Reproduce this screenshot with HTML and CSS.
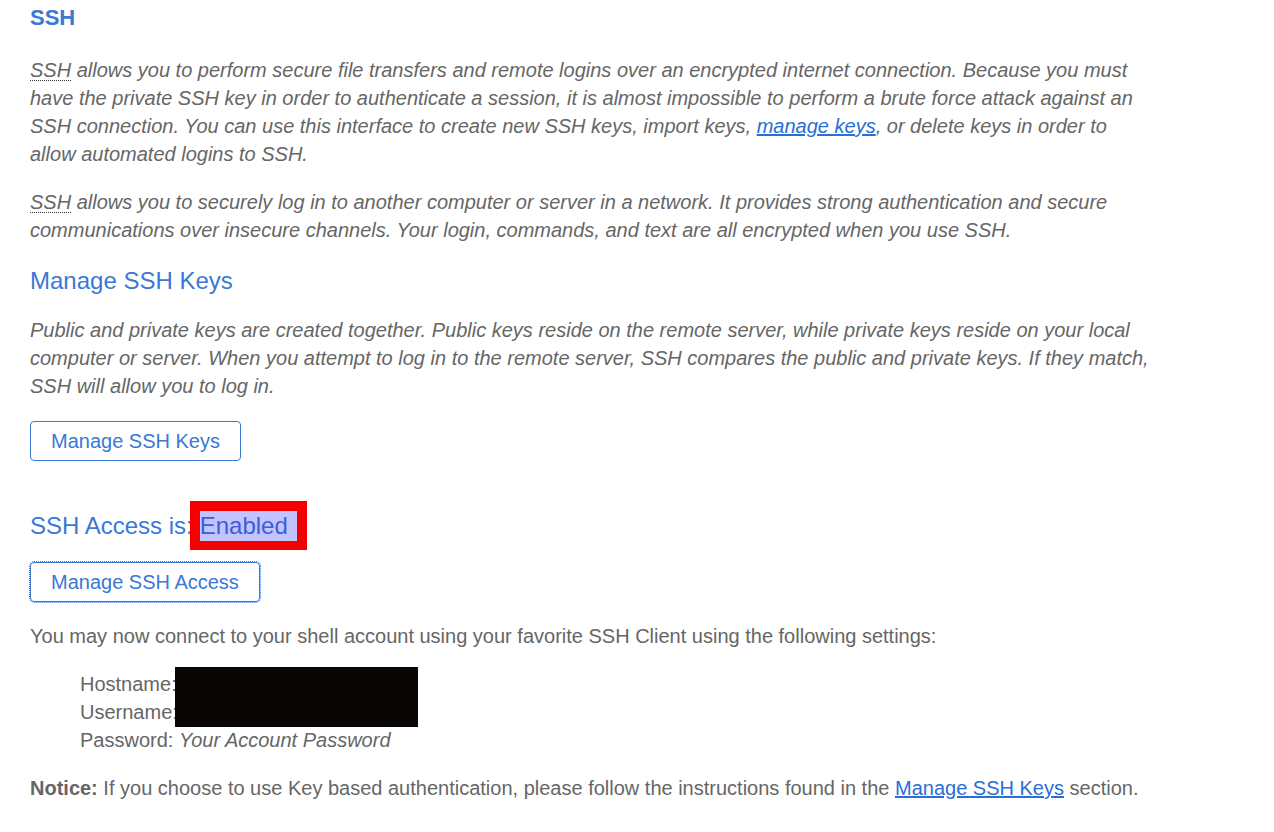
FILE: index.html
```html
<!DOCTYPE html>
<html>
<head>
<meta charset="utf-8">
<link rel="stylesheet" href="styles.css">
</head>
<body>
<div class="page">
  <h1 class="title">SSH</h1>
  <p class="desc"><abbr>SSH</abbr> allows you to perform secure file transfers and remote logins over an encrypted internet connection. Because you must have the private SSH key in order to authenticate a session, it is almost impossible to perform a brute force attack against an SSH connection. You can use this interface to create new SSH keys, import keys, <a href="#">manage keys</a>, or delete keys in order to allow automated logins to SSH.</p>
  <p class="desc"><abbr>SSH</abbr> allows you to securely log in to another computer or server in a network. It provides strong authentication and secure communications over insecure channels. Your login, commands, and text are all encrypted when you use SSH.</p>
  <h2 class="subtitle">Manage SSH Keys</h2>
  <p class="desc">Public and private keys are created together. Public keys reside on the remote server, while private keys reside on your local computer or server. When you attempt to log in to the remote server, SSH compares the public and private keys. If they match, SSH will allow you to log in.</p>
  <button class="btn">Manage SSH Keys</button>
  <h2 class="access">SSH Access is:<span class="mark"><span class="hl">Enabled</span></span></h2>
  <button class="btn focus">Manage SSH Access</button>
  <p class="plain">You may now connect to your shell account using your favorite SSH Client using the following settings:</p>
  <div class="creds">
    <div class="redact"></div>
    <div>Hostname:</div>
    <div>Username:</div>
    <div>Password: <em>Your Account Password</em></div>
  </div>
  <p class="plain notice"><strong>Notice:</strong> If you choose to use Key based authentication, please follow the instructions found in the <a href="#">Manage SSH Keys</a> section.</p>
</div>
</body>
</html>
```

FILE: styles.css
```css
html, body {
  margin: 0;
  padding: 0;
  background: #fff;
}
body {
  font-family: "Liberation Sans", Arial, sans-serif;
  color: #666;
  font-size: 20px;
}
.page {
  padding: 0 0 0 30px;
  width: 1125px;
}
.title {
  margin: 0;
  padding-top: 5px;
  font-size: 22px;
  line-height: 26px;
  font-weight: bold;
  color: #3a78d6;
}
.desc {
  font-style: italic;
  line-height: 28px;
  margin: 25px 0 0;
}
.desc + .desc {
  margin-top: 20px;
}
abbr {
  text-decoration: underline dotted #333;
  text-decoration-thickness: 1px;
  text-underline-offset: 3px;
}
a {
  color: #2a6fd6;
  text-decoration: underline;
}
.subtitle {
  margin: 22px 0 0;
  font-size: 24px;
  line-height: 30px;
  font-weight: normal;
  color: #3a78d6;
}
.subtitle + .desc {
  margin-top: 20px;
}
.btn {
  display: block;
  margin-top: 21px;
  height: 40px;
  padding: 0 20px;
  background: #fff;
  border: 1px solid #3a78d6;
  border-radius: 4px;
  color: #3a78d6;
  font-family: "Liberation Sans", Arial, sans-serif;
  font-size: 20px;
}
.btn.focus {
  margin-top: 12px;
  outline: 1px dotted #3a78d6;
  outline-offset: 0;
}
.access {
  margin: 40px 0 0;
  font-size: 24px;
  line-height: 49px;
  font-weight: normal;
  color: #3a78d6;
  display: flex;
  align-items: center;
}
.mark {
  display: inline-block;
  border: 10px solid #f50000;
  border-bottom-width: 9px;
  margin-left: -3px;
  line-height: 30px;
}
.hl {
  display: block;
  background: #c3c3ff;
  color: #3a5fd6;
  padding-right: 9px;
}
.plain {
  margin: 20px 0 0;
  line-height: 28px;
}
.creds {
  position: relative;
  margin: 20px 0 0 50px;
  line-height: 28px;
}
.redact {
  position: absolute;
  left: 95px;
  top: -3px;
  width: 243px;
  height: 60px;
  background: #0a0505;
}
.notice {
  margin-top: 20px;
}
strong {
  font-weight: bold;
}
```
